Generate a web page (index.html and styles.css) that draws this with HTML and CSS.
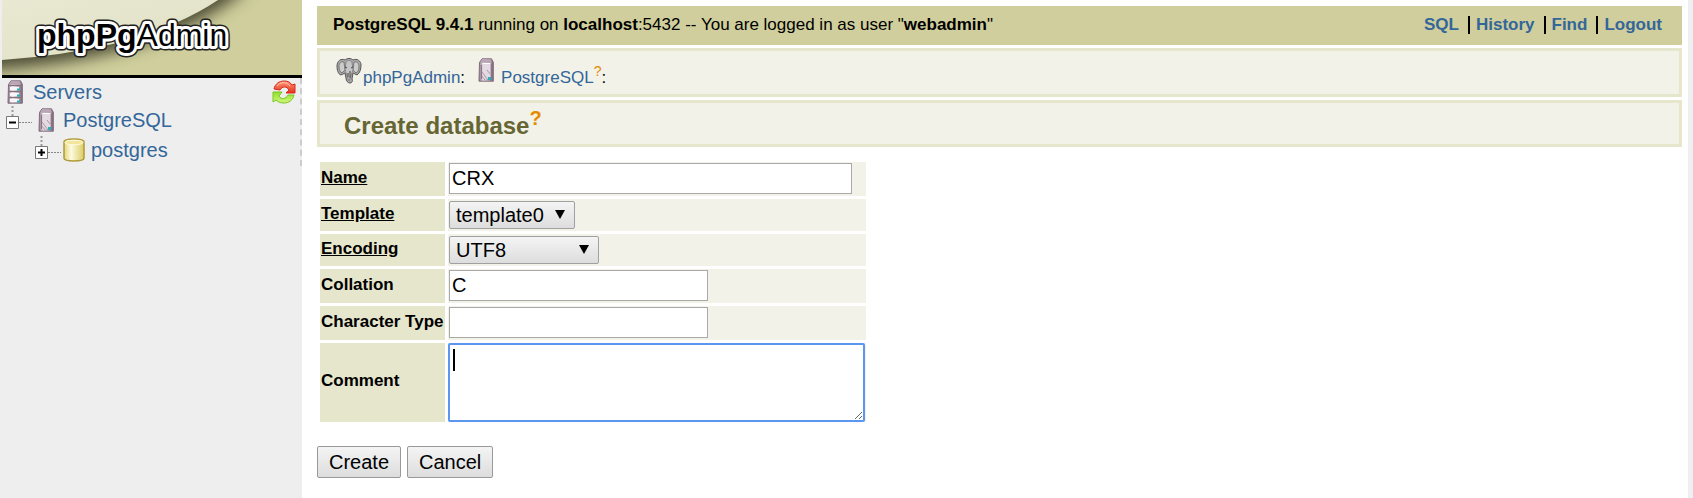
FILE: index.html
```html
<!DOCTYPE html>
<html lang="en">
<head>
<meta charset="utf-8">
<title>phpPgAdmin</title>
<link rel="stylesheet" href="styles.css">
</head>
<body>
<svg class="defs" aria-hidden="true">
  <defs>
    <linearGradient id="metal" x1="0" x2="1" y1="0" y2="0">
      <stop offset="0" stop-color="#8d7488"/><stop offset=".3" stop-color="#e6dde4"/><stop offset=".65" stop-color="#c3b2c0"/><stop offset="1" stop-color="#7b6477"/>
    </linearGradient>
    <linearGradient id="cream" x1="0" x2="1" y1="0" y2="0">
      <stop offset="0" stop-color="#e2d577"/><stop offset=".35" stop-color="#fdfbe0"/><stop offset="1" stop-color="#dccb62"/>
    </linearGradient>
    <linearGradient id="red" x1="0" x2="0" y1="0" y2="1">
      <stop offset="0" stop-color="#ff9a78"/><stop offset="1" stop-color="#e8301c"/>
    </linearGradient>
    <linearGradient id="green" x1="0" x2="0" y1="0" y2="1">
      <stop offset="0" stop-color="#8fe02c"/><stop offset="1" stop-color="#d2f77c"/>
    </linearGradient>
    <symbol id="server" viewBox="0 0 16 24">
      <path d="M1.500 4.500 4 .8h9.500l1.800 3.500V23.200H1z" fill="url(#metal)" stroke="#806c7c"/>
      <path d="M2 4.800 4.300 1.300h8.500l1 3.500z" fill="#b9a5b5"/>
      <path d="M4.500 6h8v15h-8z" fill="#e3dbe1"/>
      <path d="M4.500 5.500h8" stroke="#fff"/>
      <path d="M3.500 7v14M13.500 6v16" stroke="#8d7488"/>
      <path d="m4 14 6 8M4 18l3 4M9 12l3 4" stroke="#a997a6"/>
      <path d="M10 19h3v3h-3z" fill="#25b3b9"/>
    </symbol>
    <symbol id="servers" viewBox="0 0 16 24">
      <path d="M1.500 4.500 4 .8h9.500l1.800 3.500V23.200H1z" fill="url(#metal)" stroke="#806c7c"/>
      <path d="M2 4.800 4.300 1.300h8.500l1 3.500z" fill="#b9a5b5"/>
      <path d="M3 7h9v3H3zm0 6h9v3H3zm0 6h9v3H3z" fill="#f8f5f7"/>
      <path d="M2 11.500h12M2 17.500h12M2 5.500h12" stroke="#87717f"/>
      <path d="M10 8.500h3v2h-3zm0 6h3v2h-3zm0 6h3v2h-3z" fill="#25b3b9"/>
    </symbol>
  </defs>
</svg>
<div class="app">
  <aside class="sidebar">
    <a class="logo" href="#" aria-label="phpPgAdmin">
      <svg viewBox="0 0 300 75" preserveAspectRatio="xMinYMin slice">
        <defs>
          <filter id="soft" x="-20%" y="-20%" width="140%" height="160%"><feGaussianBlur stdDeviation="8"/></filter>
          <linearGradient id="swoosh" x1="0" x2="1" y1="0" y2="1"><stop offset="0" stop-color="#e9e9d3"/><stop offset=".55" stop-color="#e4e4cb"/><stop offset=".7" stop-color="#dadab0"/><stop offset="1" stop-color="#e6e6ce"/></linearGradient>
        </defs>
        <path d="M0 0h300v75H0z" fill="#cfce9c"/>
        <path d="M-30 71Q60 67 130 47T246-12L120-40H-30z" fill="#4b4b34" filter="url(#soft)"/>
        <path d="M0 60Q60 56 120 42Q180 25 219-2H0z" fill="url(#swoosh)"/>
        <g class="wordmark">
          <text class="wordmark-edge" x="35" y="46"><tspan class="heavy">phpPg</tspan>Admin</text>
          <text class="wordmark-halo" x="35" y="46"><tspan class="heavy">phpPg</tspan>Admin</text>
          <text x="35" y="46"><tspan class="heavy">phpPg</tspan>Admin</text>
        </g>
      </svg>
    </a>
    <nav class="tree">
      <div class="node root">
        <svg class="server-icon"><use href="#servers"/></svg>
        <a href="#">Servers</a>
        <button class="refresh" type="button" aria-label="Refresh">
          <svg viewBox="0 0 24 24">
            <path d="M2 9C3 4 7 1 12 1c4 0 6 1 8 4l3-1v9h-9l3-3c-2-4-7-4-9 0z" fill="url(#red)" stroke="#d32b1c"/>
            <path d="M22 15c-1 5-5 8-10 8-4 0-6-1-8-3l-3 2v-10h9l-3 4c2 4 7 3 9-1z" fill="url(#green)" stroke="#79c51e"/>
            <path d="M5 6c3-4 9-5 13 0" fill="none" stroke="#ffc6a8"/>
          </svg>
        </button>
      </div>
      <div class="node level-1">
        <svg class="twig" viewBox="0 0 28 28">
          <path d="M7.500 0v11" stroke="#999" stroke-width="2" stroke-dasharray="2 2"/>
          <path d="M14 16.500h13" stroke="#888" stroke-width="1" stroke-dasharray="2 1"/>
          <path d="M1.500 10.500h12v12h-12z" fill="#fff" stroke="#777" stroke-width="1"/>
          <path d="M4 16.500h7" stroke="#000" stroke-width="2"/>
        </svg>
        <svg class="server-icon"><use href="#server"/></svg>
        <a href="#">PostgreSQL</a>
      </div>
      <div class="node level-2">
        <svg class="twig" viewBox="0 0 28 28">
          <path d="M7.500 0v10" stroke="#999" stroke-width="2" stroke-dasharray="2 2"/>
          <path d="M14 16.500h13" stroke="#888" stroke-width="1" stroke-dasharray="2 1"/>
          <path d="M1.500 10.500h12v12h-12z" fill="#fff" stroke="#777" stroke-width="1"/>
          <path d="M4 16.500h7M7.500 13v7" stroke="#000" stroke-width="2"/>
        </svg>
        <svg class="db-icon" viewBox="0 0 22 24">
          <path d="M1 4C1 0 21 0 21 4v16c0 4-20 4-20 0z" fill="url(#cream)" stroke="#b09a3a" stroke-width="1.500"/>
          <path d="M2 4.500c0-3 18-3 18 0s-18 3-18 0z" fill="#f1e69c" stroke="#fffbe0"/>
        </svg>
        <a href="#">postgres</a>
      </div>
    </nav>
  </aside>

  <main class="content">
    <header class="topbar">
      <div><b>PostgreSQL 9.4.1</b> running on <b>localhost</b>:5432 -- You are logged in as user "<b>webadmin</b>"</div>
      <nav class="toplinks">
        <a href="#">SQL</a><a href="#">History</a><a href="#">Find</a><a href="#">Logout</a>
      </nav>
    </header>
    <nav class="trail">
      <span class="crumb">
        <svg class="elephant" viewBox="0 0 26 26">
          <path d="M9 2C5 0 1 3 1 8c0 4 1 8 4 9l4-2 1 5c0 3 2 5 4 5s3-2 2-4l1-6 4 2c3-2 4-6 4-10 0-4-4-7-8-5-2-2-6-2-8 0z" fill="#aaa" stroke="#555"/>
          <path d="M8 4C5 3 3 5 3 9c0 3 1 5 3 6l3-3zM18 4c3-1 5 1 5 5 0 3-1 5-3 6l-3-3z" fill="#ccc" stroke="#777"/>
          <path d="M10 4c2-2 4-2 6 0l1 8-2 6-2 5-2-5-2-6z" fill="#c5c5c5" stroke="#888"/>
          <path d="M9 9l2 1M15 10l2-1M12 15v4M14 13v7" stroke="#444"/>
        </svg>
        <span><a href="#">phpPgAdmin</a>:</span>
      </span>
      <span class="crumb">
        <svg class="server-icon"><use href="#server"/></svg>
        <span><a href="#">PostgreSQL</a><a class="help" href="#">?</a>:</span>
      </span>
    </nav>
    <h2 class="title">Create database<a class="help" href="#">?</a></h2>

    <form>
      <table class="fields">
        <tr><th class="required"><label for="name">Name</label></th><td><input class="wide" id="name" type="text" value="CRX"></td></tr>
        <tr><th class="required"><label for="template">Template</label></th><td><span class="picker"><select class="short" id="template"><option>template0</option></select></span></td></tr>
        <tr><th class="required"><label for="encoding">Encoding</label></th><td><span class="picker"><select class="long" id="encoding"><option>UTF8</option></select></span></td></tr>
        <tr><th><label for="collation">Collation</label></th><td><input id="collation" type="text" value="C"></td></tr>
        <tr><th><label for="ctype">Character Type</label></th><td><input id="ctype" type="text"></td></tr>
        <tr><th><label for="comment">Comment</label></th><td><div class="comment"><textarea id="comment"></textarea><span class="caret"></span></div></td></tr>
      </table>
      <div class="actions">
        <button type="submit">Create</button>
        <button type="button">Cancel</button>
      </div>
    </form>
  </main>
</div>
</body>
</html>
```
FILE: styles.css
```css
* { box-sizing: border-box; }
body {
  margin: 0;
  background: #eeeff1;
  color: #000;
  font: 17px/20px "Liberation Sans", Arial, sans-serif;
}
a { color: #369; text-decoration: none; }
svg { display: block; flex: none; }
.defs { position: absolute; width: 0; height: 0; }

.app { display: flex; min-height: 100vh; padding-right: 5px; }

.sidebar { width: 302px; flex: none; padding-left: 2px; background: #eee; }
.logo { display: block; border-bottom: 3px solid #000; }
.logo svg { width: 100%; height: 75px; }
.wordmark { font-size: 32px; stroke-linejoin: round; }
.wordmark .heavy { font-weight: bold; }
.wordmark-edge { stroke: #222; stroke-width: 9px; }
.wordmark-halo { fill: #fff; stroke: #fff; stroke-width: 6px; }

.tree { padding: 0 4px 0 3px; border-right: 2px dashed #ccc; font-size: 20px; line-height: 28px; }
.node { display: flex; align-items: center; height: 28px; }
.root { padding-left: 2px; }
.root a { margin-left: 10px; }
.level-1 a { margin-left: 9px; }
.level-2 { height: 32px; padding-left: 29px; }
.level-2 a { margin-left: 6px; }
.level-1 .server-icon { margin-left: 5px; }
.server-icon { width: 16px; height: 24px; }
.twig { width: 28px; height: 28px; }
.db-icon { width: 22px; height: 24px; margin-left: 1px; }
.refresh { margin-left: auto; padding: 0; border: 0; background: none; }
.refresh svg { width: 24px; height: 24px; }

.content { flex: 1; min-width: 0; padding: 6px 6px 0 15px; background: #fff; }
.topbar {
  display: flex;
  justify-content: space-between;
  align-items: center;
  height: 39px;
  padding: 0 20px 2px 16px;
  background: #cfce9c;
}
.toplinks { display: flex; font-weight: bold; }
.toplinks a { line-height: 18px; }
.toplinks a + a { margin-left: 9px; padding-left: 6px; border-left: 2px solid #000; }

.trail, .title { margin: 3px 0 0; border: 3px solid #e5e6cb; background: #f2f2e9; }
.trail { display: flex; gap: 13px; height: 49px; padding: 7px 16px 0; }
.crumb { display: flex; gap: 7px; }
.crumb > span { padding-top: 10px; }
.crumb:first-child { gap: 1px; }
.elephant { width: 26px; height: 26px; }
.help { color: #e68a00; vertical-align: super; line-height: 0; }
.trail .help { font-size: 14px; }
.title { height: 47px; padding: 7px 24px 0; color: #663; font-size: 24px; line-height: 32px; }
.title .help { font-size: 20px; }

.fields { margin-top: 12px; border-collapse: separate; border-spacing: 3px; }
.fields th { width: 125px; padding: 1px 0 4px 1px; background: #e5e6cb; text-align: left; white-space: nowrap; }
.fields td { width: 418px; padding: 1px; background: #f2f2e9; }
.required label { text-decoration: underline; }

input, select, textarea, button { font: 20px/24px "Liberation Sans", Arial, sans-serif; color: #000; }
input { display: block; width: 259px; height: 31px; margin-bottom: 1px; padding: 2px; border: 1px solid #a9a9a9; }
.wide { width: 403px; }
.picker { position: relative; display: block; width: max-content; padding: 1px 0; }
.picker::after {
  content: "";
  position: absolute;
  right: 10px;
  top: 10px;
  border: solid transparent;
  border-width: 9px 5px 0;
  border-top-color: #000;
  pointer-events: none;
}
select {
  display: block;
  height: 28px;
  padding: 0 6px;
  appearance: none;
  border: 1px solid #a0a0a0;
  border-radius: 2px;
  background: linear-gradient(#f4f4f4, #ddd);
}
.short { width: 126px; }
.long { width: 150px; }
.comment { position: relative; }
textarea { display: block; width: 415px; height: 77px; border: 1px solid #7a9ccf; outline: 2px solid #5b96f0; outline-offset: -1px; border-radius: 1px; }
.caret { position: absolute; left: 4px; top: 5px; width: 2px; height: 22px; background: #000; }

.actions { display: flex; gap: 6px; margin-top: 21px; }
.actions button { height: 32px; padding: 0 11px; border: 1px solid #999; border-radius: 2px; background: linear-gradient(#f4f4f4, #ddd); }
```
